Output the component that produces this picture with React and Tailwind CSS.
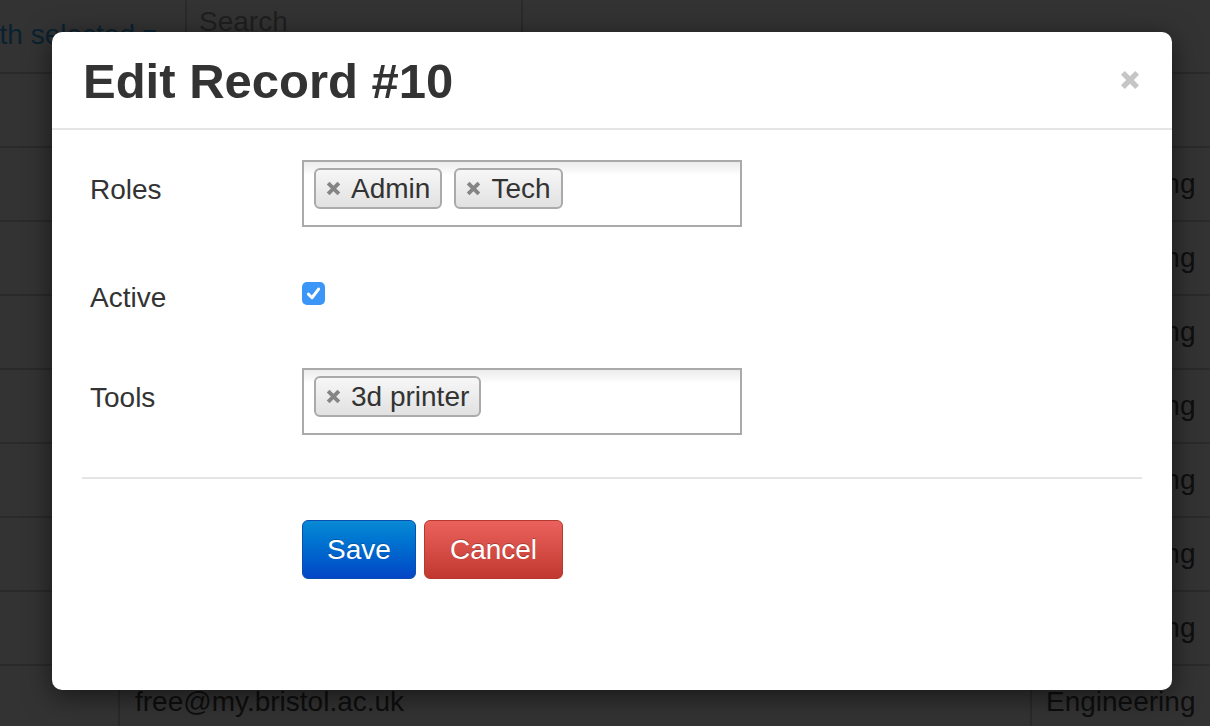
import React from 'react';

const emails = [
  '',
  'ab1234@my.bristol.ac.uk',
  'cd5678@my.bristol.ac.uk',
  'ef9012@my.bristol.ac.uk',
  'gh3456@my.bristol.ac.uk',
  'ij7890@my.bristol.ac.uk',
  'kl1122@my.bristol.ac.uk',
  'mn3344@my.bristol.ac.uk',
  'free@my.bristol.ac.uk',
];

function XIcon({ size = 14, color = '#888', width = 3.2 }) {
  return (
    <svg width={size} height={size} viewBox="0 0 14 14">
      <path d="M2 2L12 12M12 2L2 12" stroke={color} strokeWidth={width} />
    </svg>
  );
}

function Tag({ label }) {
  return (
    <span className="flex h-[41px] items-center gap-[10px] rounded-[6px] border-2 border-[#aaa] bg-linear-to-b from-[#f7f7f7] to-[#e1e1e1] px-[10px] text-[28px] leading-none text-[#333]">
      <XIcon size={15} width={3.6} color="#858585" />
      {label}
    </span>
  );
}

function TagBox({ tags }) {
  return (
    <div className="flex h-[67px] w-[440px] items-start gap-[12px] border-2 border-[#aaa] bg-linear-to-b from-[#ececec] via-white via-[22%] to-white px-[10px] pt-[6px]">
      {tags.map((t) => (
        <Tag key={t} label={t} />
      ))}
    </div>
  );
}

export default function App() {
  return (
    <div className="relative h-[726px] w-[1210px] overflow-hidden bg-[#333] font-['Liberation_Sans',Arial,sans-serif]">
      {/* dimmed page behind the modal */}
      <div className="flex h-[74px] border-b-2 border-[#2a2a2a]">
        <div className="flex w-[185px] shrink-0 items-start justify-end gap-[8px] overflow-hidden whitespace-nowrap pr-[28px] pt-[15px] text-[28px] leading-[40px] text-[#0a2130]">
          With selected
          <span className="mt-[15px] h-0 w-0 border-x-[7px] border-t-[8px] border-x-transparent border-t-[#0a2130]" />
        </div>
        <div className="w-[338px] shrink-0 border-x-2 border-[#2a2a2a] px-[12px] pt-[2px] text-[28px] leading-[40px] text-[#1f1f1f]">
          Search
        </div>
      </div>
      {emails.map((email, i) => (
        <div key={i} className="flex h-[74px] border-b-2 border-[#2a2a2a] text-[28px] text-[#0e0e0e]">
          <div className="w-[120px] shrink-0 border-r-2 border-[#2a2a2a]" />
          <div className="flex flex-1 items-center pl-[15px]">{email}</div>
          <div className="flex w-[180px] shrink-0 items-center border-l-2 border-[#2a2a2a] pl-[14px]">
            {i > 0 ? 'Engineering' : ''}
          </div>
        </div>
      ))}

      {/* modal */}
      <div className="absolute left-[52px] top-[32px] flex h-[658px] w-[1120px] flex-col rounded-[10px] bg-white shadow-[0_6px_28px_rgba(0,0,0,0.55)]">
        <div className="flex h-[98px] shrink-0 items-center justify-between border-b-2 border-[#e5e5e5] pl-[31px] pr-[32px]">
          <h1 className="pt-[2px] text-[49px] font-bold leading-none text-[#333]">Edit Record #10</h1>
          <XIcon size={20} color="#c6c6c6" width={3.8} />
        </div>

        <div className="flex flex-col px-[30px] pt-[30px] text-[28px] text-[#333]">
          <div className="flex h-[67px] pl-[8px]">
            <label className="w-[212px] shrink-0 pt-[10px] leading-[40px]">Roles</label>
            <TagBox tags={['Admin', 'Tech']} />
          </div>

          <div className="mt-[51px] flex h-[40px] pl-[8px]">
            <label className="w-[212px] shrink-0 leading-[40px]">Active</label>
            <span className="mt-[4px] flex h-[23px] w-[23px] items-center justify-center rounded-[5px] bg-[#3b96f7]">
              <svg width="17" height="17" viewBox="0 0 16 16">
                <path d="M3.2 8.6L6.6 12L12.8 3.8" fill="none" stroke="#fff" strokeWidth="2.8" strokeLinecap="round" strokeLinejoin="round" />
              </svg>
            </span>
          </div>

          <div className="mt-[50px] flex h-[67px] pl-[8px]">
            <label className="w-[212px] shrink-0 pt-[10px] leading-[40px]">Tools</label>
            <TagBox tags={['3d printer']} />
          </div>

          <div className="mt-[42px] h-[2px] bg-[#e5e5e5]" />

          <div className="mt-[41px] flex gap-[8px] pl-[220px]">
            <button className="h-[59px] w-[114px] rounded-[6px] border border-[#0b4fae] bg-linear-to-b from-[#0b8ad5] to-[#0745c6] text-[28px] text-white [text-shadow:0_-1px_0_rgba(0,0,0,0.25)]">
              Save
            </button>
            <button className="h-[59px] w-[139px] rounded-[6px] border border-[#b5392f] bg-linear-to-b from-[#eb625c] to-[#c0382f] text-[28px] text-white [text-shadow:0_-1px_0_rgba(0,0,0,0.25)]">
              Cancel
            </button>
          </div>
        </div>
      </div>
    </div>
  );
}
